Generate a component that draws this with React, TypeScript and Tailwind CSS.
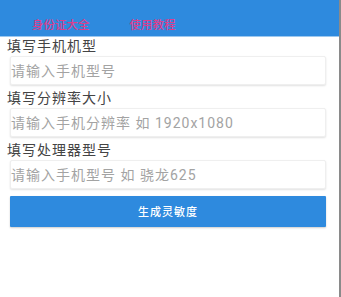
import React from "react";

const fields = [
  { label: "填写手机机型", placeholder: "请输入手机型号" },
  { label: "填写分辨率大小", placeholder: "请输入手机分辨率 如 1920x1080" },
  { label: "填写处理器型号", placeholder: "请输入手机型号 如 骁龙625" },
];

export default function App() {
  return (
    <div
      className="flex h-[297px] w-[341px] bg-white"
      style={{ fontFamily: 'Roboto, "Noto Sans CJK SC", sans-serif' }}
    >
      <div className="flex w-[339px] flex-col">
        <div
          className="flex h-[37px] items-end gap-[40px] border-b border-[#9cc8ef] bg-[#2e8ade] pb-[6px] pl-[32px] text-[11.5px] font-medium leading-none text-[#d9408f]"
          style={{ fontFamily: '"Noto Sans CJK SC", sans-serif' }}
        >
          <span>身份证大全</span>
          <span>使用教程</span>
        </div>
        <div className="flex flex-col px-[10px]">
          {fields.map((f) => (
            <div key={f.label} className="flex flex-col">
              <div className="-ml-[3px] h-[19px] text-[14px] leading-[19px] tracking-[1px] text-[#444]">
                {f.label}
              </div>
              <input
                placeholder={f.placeholder}
                className="mb-[4px] h-[29px] w-[316px] rounded-[2px] border border-[#efefef] bg-white px-0 text-[14px] tracking-[1px] shadow-[0_1px_2px_rgba(0,0,0,0.12)] outline-none placeholder:text-[#a3a3a3]"
              />
            </div>
          ))}
          <button
            className="mt-[3px] h-[31px] w-[316px] rounded-[1px] bg-[#2e8ade] text-[11px] font-medium tracking-[1px] text-white shadow-[0_1px_2px_rgba(0,0,0,0.2)]"
            style={{ fontFamily: '"Noto Sans CJK SC", sans-serif' }}
          >
            生成灵敏度
          </button>
        </div>
      </div>
      <div className="w-[2px] bg-[#8a8a8a]" />
    </div>
  );
}
